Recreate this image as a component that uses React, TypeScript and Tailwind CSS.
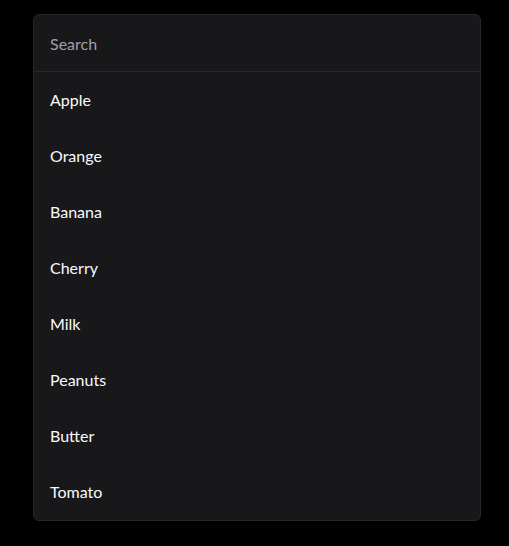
const items = ['Apple', 'Orange', 'Banana', 'Cherry', 'Milk', 'Peanuts', 'Butter', 'Tomato'];

export default function App() {
  return (
    <div className="min-h-screen bg-black pt-[14px] pl-[33px]" style={{ fontFamily: 'Lato, sans-serif' }}>
      <div className="w-[448px] rounded-md border border-[#27272a] bg-[#18181b]">
        <input
          placeholder="Search"
          className="block w-full h-[57px] border-b border-[#27272a] bg-transparent px-4 text-base text-[#fafafa] placeholder:text-[#a1a1aa] outline-none"
        />
        <ul>
          {items.map((item) => (
            <li key={item} className="h-14 px-4 flex items-center text-base text-[#fafafa]">
              {item}
            </li>
          ))}
        </ul>
      </div>
    </div>
  );
}
